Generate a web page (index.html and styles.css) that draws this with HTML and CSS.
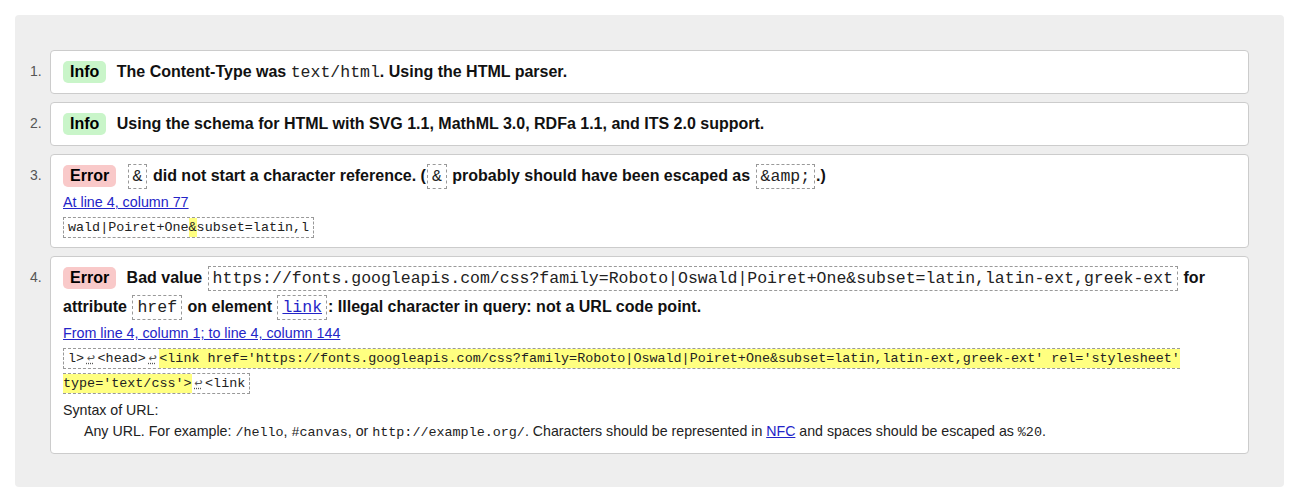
FILE: index.html
```html
<!DOCTYPE html>
<html lang="en">
<head>
<meta charset="utf-8">
<title>Validator messages</title>
<link rel="stylesheet" href="styles.css">
</head>
<body>
<div class="panel">
  <ol class="list">
    <li class="item">
      <span class="num">1.</span>
      <div class="box">
        <p class="msg"><strong class="badge info">Info</strong> The Content-Type was <code>text/html</code>. Using the HTML parser.</p>
      </div>
    </li>
    <li class="item">
      <span class="num">2.</span>
      <div class="box">
        <p class="msg"><strong class="badge info">Info</strong> Using the schema for HTML with SVG 1.1, MathML 3.0, RDFa 1.1, and ITS 2.0 support.</p>
      </div>
    </li>
    <li class="item">
      <span class="num">3.</span>
      <div class="box">
        <p class="msg"><strong class="badge error">Error</strong> <code class="b">&amp;</code> did not start a character reference. (<code class="b">&amp;</code> probably should have been escaped as <code class="b">&amp;amp;</code>.)</p>
        <p class="loc"><a href="#">At line 4, column 77</a></p>
        <p class="ext"><code>wald|Poiret+One<mark>&amp;</mark>subset=latin,l</code></p>
      </div>
    </li>
    <li class="item">
      <span class="num">4.</span>
      <div class="box">
        <p class="msg"><strong class="badge error">Error</strong> Bad value <code class="b">https://fonts.googleapis.com/css?family=Roboto|Oswald|Poiret+One&amp;subset=latin,latin-ext,greek-ext</code> for attribute <code class="b">href</code> on element <code class="b"><a href="#">link</a></code>: Illegal character in query: not a URL code point.</p>
        <p class="loc"><a href="#">From line 4, column 1; to line 4, column 144</a></p>
        <p class="ext"><code>l&gt;<span class="lf">↩</span>&lt;head&gt;<span class="lf">↩</span><mark>&lt;link href='https://fonts.googleapis.com/css?family=Roboto|Oswald|Poiret+One&amp;subset=latin,latin-ext,greek-ext' rel='stylesheet' type='text/css'&gt;</mark><span class="lf">↩</span>&lt;link</code></p>
        <dl class="syntax">
          <dt>Syntax of URL:</dt>
          <dd>Any URL. For example: <code>/hello</code>, <code>#canvas</code>, or <code>http://example.org/</code>. Characters should be represented in <a href="#">NFC</a> and spaces should be escaped as <code>%20</code>.</dd>
        </dl>
      </div>
    </li>
  </ol>
</div>
</body>
</html>
```
FILE: styles.css
```css
* { box-sizing: border-box; }
html, body { margin: 0; background: #fff; }
body { font-family: "Liberation Sans", Arial, sans-serif; color: #000; }

.panel {
  margin: 15px 8px 0 15px;
  background: #eee;
  border-radius: 4px;
  padding: 35px 35px 33px 15px;
}
.list {
  list-style: none;
  margin: 0;
  padding: 0;
  display: flex;
  flex-direction: column;
  gap: 8px;
}
.item { display: flex; }
.num {
  width: 20px;
  flex: none;
  padding-top: 7px;
  line-height: 29px;
  font-size: 14px;
  color: #555;
}
.box {
  flex: 1;
  min-width: 0;
  background: #fff;
  border: 1px solid #ccc;
  border-radius: 4px;
  padding: 6px 12px 7px;
}
.msg {
  margin: 0;
  font-weight: bold;
  font-size: 16px;
  line-height: 29px;
  color: #111;
}
.badge {
  display: inline-block;
  vertical-align: top;
  margin-top: 3.5px;
  line-height: 22px;
  padding: 0 7px;
  border-radius: 5px;
  margin-right: 6px;
  color: #000;
}
.info { background: #c9f5c9; }
.error { background: #f9c9c9; }
.msg code {
  font-family: "Liberation Mono", "Courier New", monospace;
  font-weight: normal;
  font-size: 16.5px;
  line-height: 1;
  color: #222;
}
.msg code.b {
  border: 1px dashed #999;
  padding: 2px 4px;
  margin: 0 1px;
}
.msg code a { color: #2424c8; }
.loc {
  margin: 2px 0 0;
  font-size: 14.3px;
  line-height: 20px;
}
.loc a, .syntax a { color: #2424c8; }
.ext {
  margin: 3px 0 0;
  font-family: "Liberation Mono", "Courier New", monospace;
  font-size: 13.4px;
  line-height: 25px;
}
.ext code {
  font-family: inherit;
  font-size: inherit;
  border: 1px dashed #999;
  padding: 2px 4px;
  color: #222;
}
.ext mark {
  background: #ffff80;
  color: inherit;
  padding: 2px 0;
}
.lf {
  display: inline-block;
  width: 13.5px;
  text-align: center;
  color: #555;
  text-decoration: underline dotted;
}
.syntax {
  margin: 4px 0 3px;
  font-size: 14.2px;
  line-height: 20px;
  color: #222;
}
.syntax dt { margin: 0; }
.syntax dd { margin: 1px 0 0; padding-left: 21px; }
.syntax code {
  font-family: "Liberation Mono", "Courier New", monospace;
  font-size: 13.4px;
}
```
